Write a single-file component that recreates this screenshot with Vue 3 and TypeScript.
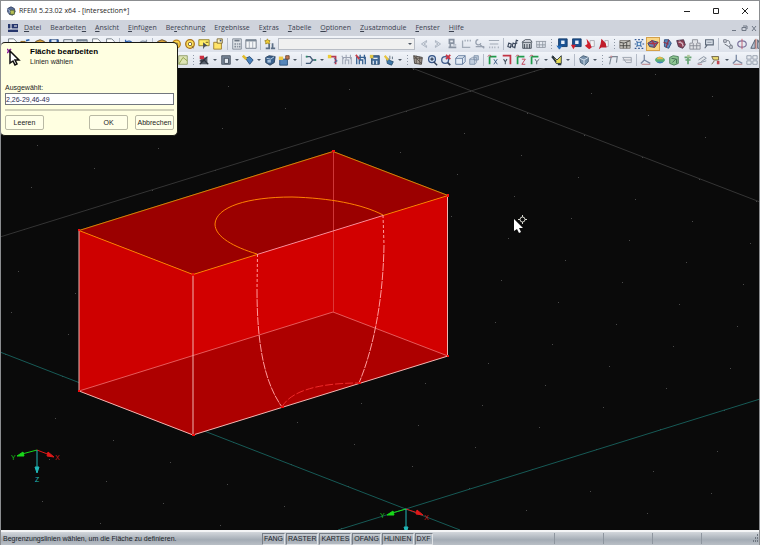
<script setup lang="ts">
import { ref } from 'vue'

interface Shape { d: string; f?: string; s?: string; w?: number }
type Item = string

const menus: { pre: string; key: string; post: string }[] = [
  { pre: '', key: 'D', post: 'atei' },
  { pre: 'Bearbeite', key: 'n', post: '' },
  { pre: '', key: 'A', post: 'nsicht' },
  { pre: '', key: 'E', post: 'infügen' },
  { pre: 'Be', key: 'r', post: 'echnung' },
  { pre: 'Er', key: 'g', post: 'ebnisse' },
  { pre: 'E', key: 'x', post: 'tras' },
  { pre: '', key: 'T', post: 'abelle' },
  { pre: '', key: 'O', post: 'ptionen' },
  { pre: '', key: 'Z', post: 'usatzmodule' },
  { pre: '', key: 'F', post: 'enster' },
  { pre: '', key: 'H', post: 'ilfe' },
]

const axes = (a: string, right: string): Shape[] => [
  { d: 'M3 3v9M3 3h8', s: '#1f9a4b', w: 2 },
  { d: 'M1 3l2-2 2 2', s: '#b03040', w: 1 },
  { d: a, s: right, w: 1 },
]

const glyphs: Record<string, Shape[]> = {
  page: [{ d: 'M3 1h6l3 3v8H3z', f: '#fff', s: '#66707c' }],
  open: [{ d: 'M1 4h5l1 2h6v6H1z', f: '#e9b33c', s: '#805a18' }, { d: 'M7 3l4-1', s: '#2860a8', w: 2 }],
  save: [{ d: 'M2 2h10v10H2z', f: '#2f62ae', s: '#183a70' }, { d: 'M4 2h6v4H4z', f: '#dbe6f4' }],
  box: [{ d: 'M2 4l5-2 5 2v6l-5 2-5-2z', f: '#dba43a', s: '#5c4420' }],
  sheet: [{ d: 'M2 2h10v10H2z', f: '#eef2f7', s: '#566270' }, { d: 'M2 5h10M5 5v7M9 5v7M5 8.500h7', s: '#98a4b0' }],
  undo: [{ d: 'M3 6c2-4 8-3 9 3M3 2v5h5', s: '#2f62ae', w: 1.5 }],
  redo: [{ d: 'M11 6c-2-4-8-3-9 3M11 2v5H6', s: '#8c98a8', w: 1.5 }],
  ring: [{ d: 'M3 7a4.500 4.500 0 1 0 9 0a4.500 4.500 0 1 0-9 0', f: '#ffd94a', s: '#b8801c', w: 1.5 }, { d: 'M5 6h4v3H5z', f: '#fff3b0', s: '#7a5a20' }],
  target: [{ d: 'M2 7a5 5 0 1 0 10 0a5 5 0 1 0-10 0', f: '#ffe25a', s: '#a8701c', w: 1.5 }, { d: 'M5 7a2 2 0 1 0 4 0a2 2 0 1 0-4 0M9 9l2 3', f: '#fff', s: '#6a5630' }],
  pick: [{ d: 'M1 2h12v7H1z', f: '#ffed68', s: '#8c7820' }, { d: 'M6 5l5 4-3 1-2 3z', f: '#444c58' }, { d: 'M9 5h3', s: '#5a4a10' }],
  folder: [{ d: 'M2 5h9v8H2z', f: '#ffe46a', s: '#97782a' }, { d: 'M6 1h6v5H6z', f: '#fff7c2', s: '#75602a' }, { d: 'M9 3h2', s: '#334e88', w: 2 }],
  calc: [{ d: 'M2 1h10v12H2z', f: '#dfe3e8', s: '#788390' }, { d: 'M4 3h6', s: '#6d7783', w: 2 }, { d: 'M4 7h2m1 0h1m1 0h2M4 10h2m1 0h1m1 0h2', s: '#828c98', w: 2 }],
  table: [{ d: 'M1 2h12v10H1z', f: '#f4f6f8', s: '#697482' }, { d: 'M1 3h12', s: '#7a8795', w: 2 }, { d: 'M5 4v8M9 4v8', s: '#a0aab4' }],
  result: [{ d: 'M4 1l1 2 2 0-1 2 1 2-3-1-2 1 0-2-1-2 2 0z', f: '#f3cf33', s: '#9f882a' }, { d: 'M2 12h4V7M8 12h5M10 12V6', s: '#5c6f86', w: 2 }],
  prev: [{ d: 'M10 3L4 7l6 4V9L7 7l3-2z', f: '#dde2ea', s: '#a4adba' }],
  next: [{ d: 'M4 3l6 4-6 4V9l3-2-3-2z', f: '#dde2ea', s: '#a4adba' }],
  gray1: [{ d: 'M4 2h5v4H4zM3 11h9M5 6v5', s: '#8993a2', w: 2 }, { d: 'M8 8h4', s: '#b9c0cc', w: 2 }],
  gray2: [{ d: 'M3 3v8h9M6 2v2m3-2v2m3-2v2', s: '#a2abb7', w: 1.5 }],
  gray3: [{ d: 'M5 2a3 3 0 1 0 3 4M2 10h10M7 8l5 4', s: '#98a1af', w: 1.5 }],
  gray4: [{ d: 'M1 3h12M2 7h10M2 10v2m3-2v2m3-2v2m4-2v2', s: '#a1a9b5', w: 1.2 }],
  glasses: [{ d: 'M2 6l3 1-1 4-3-1zM7 6l3 1-1 4-3-1zM11 2L9 12M11 3h2M10 6h2', s: '#39465a', w: 1.3 }],
  building: [{ d: 'M2 5h10v7H2z', f: '#c5cad0', s: '#3c454f' }, { d: 'M1 5l4-3h6l2 3M4 7v5m3-5v5m3-5v5', s: '#343d48' }],
  values: [{ d: 'M1 4h12M2 4v7h10V4M5 4v7m4-7v7M2 8h10', s: '#8c949f' }],
  blueload: [{ d: 'M3 1h10v9H3z', f: '#1b5292', s: '#123866' }, { d: 'M6 3h4v4H6z', f: '#e8f0fa' }, { d: 'M1 9l3 4 3-4', f: '#2068b8', s: '#2068b8' }],
  redload: [{ d: 'M3 1h10v9H3z', f: '#1b5292', s: '#123866' }, { d: 'M6 3h4v4H6z', f: '#e8f0fa' }, { d: 'M1 8h6l-3 5z', f: '#d0202c' }],
  redflag: [{ d: 'M7 3h5v7H7z', f: '#f3f3f5', s: '#a7a7b0' }, { d: 'M3 1l4 5 2 5-3 2-5-4 3-2z', f: '#cf1f2c' }],
  redflag2: [{ d: 'M8 3h4v7H8z', f: '#f3f3f5', s: '#a7a7b0' }, { d: 'M4 1l5 5 1 5-6 0-3 2 2-6z', f: '#c01d2a' }],
  grid: [{ d: 'M1 3h12v9H1z', f: '#c8c6bf', s: '#77746e' }, { d: 'M1 5l5 1 7-3M5 6v6M9 5v7M1 9h12', s: '#41403d' }],
  sun: [{ d: 'M2 2h2m2 0h2m2 0h2M2 7h2m7 0h2M2 12h2m2 0h2m2 0h2M4 4l6 6m0-6l-6 6', s: '#365a94', w: 1.4 }, { d: 'M5 5h4v4H5z', f: '#d5e8fa', s: '#2563a5' }],
  select: [{ d: 'M1 6l5-3 7 2-4 6-6-1z', f: '#6c86b3', s: '#283c66' }, { d: 'M2 6l7 1 4-2M5 3l4 4-1 4', s: '#ab3445', w: 1.5 }],
  member: [{ d: 'M4 2h5l3 4-3 6-5-2z', f: '#5b8ac0', s: '#244777' }, { d: 'M9 2L6 11M3 5l6 2', s: '#8f3146', w: 1.4 }],
  solid: [{ d: 'M2 3l8-1 2 6-3 4-5-2z', f: '#8c4054', s: '#453048' }, { d: 'M4 5l5 1v4M5 3l5 6', s: '#dbc0cc' }],
  mesh: [{ d: 'M4 2h6v4h3v7H1V6h3zM1 9h12M5 6v7m4-7v7', f: '#e0e1e5', s: '#858891' }],
  frame: [{ d: 'M3 2h9v6H3zM2 12l3-4', f: '#d9dfe8', s: '#5d6979', w: 1.3 }, { d: 'M5 5h5', s: '#7e8997' }],
  nodes: [{ d: 'M2 2h3v3H2zM9 9h3v3H9z', f: '#e2e5eb', s: '#656a78' }, { d: 'M6 3c5 0 1 4 5 5M3 7l5 3', s: '#575d69' }],
  rotate: [{ d: 'M2 7c0-5 10-5 10 0s-10 5-10 0', s: '#7e759f', w: 1.4 }, { d: 'M7 1v12', s: '#bd5266' }],
  mirror: [{ d: 'M6 2v10H1zM9 2v10h5z', f: '#b8c3d2', s: '#4a5666' }, { d: 'M7 1v12', s: '#c15a4a' }],
  green: [{ d: 'M2 2h10v10H2z', f: '#dde4b5', s: '#8a9862' }, { d: 'M2 12l5-8 5 4', s: '#8b9e3f' }],
  cut: [{ d: 'M3 4h8v8H3z', f: '#59606c' }, { d: 'M2 12l9-9M4 4l8 8M2 8h5', s: '#2f3540', w: 1.4 }, { d: 'M2 2h5v4H2z', f: '#cc3141' }],
  hollow: [{ d: 'M2 2h10v10H2z', f: '#7a8798', s: '#48525f' }, { d: 'M5 5h5v6H5z', f: '#e3e9f0', s: '#394452' }],
  surface: [{ d: 'M4 5l5-2 4 4-4 5z', f: '#4a82bd', s: '#234770' }, { d: 'M1 2l4 4', s: '#e2bb2c', w: 3 }],
  cube: [{ d: 'M2 4l4-2 7 1-1 7-5 3-5-3z', f: '#3c638f', s: '#263d59' }, { d: 'M3 5l5 1 4-3', s: '#d0dfef' }, { d: 'M4 7h4v3H4z', f: '#a8c2dd' }],
  insert: [{ d: 'M2 6h9v7H2z', f: '#5686ba', s: '#284d79' }, { d: 'M1 3h5v4H1z', f: '#edc843' }, { d: 'M9 2h4v4H9z', f: '#c9784e', s: '#654433' }],
  branch: [{ d: 'M1 3h5l3 4-3 4H1M9 7h4', s: '#435a77', w: 1.6 }, { d: 'M1 2h2v2H1zM11 6h2v2h-2z', f: '#2e8f69' }],
  support: [{ d: 'M3 3h7v9', s: '#b43951', w: 2 }, { d: 'M1 1h4v4H1z', f: '#edcc36' }, { d: 'M8 5l4 3-4 2', s: '#316296' }],
  fadebeam: [{ d: 'M2 12V4h10v8M5 12V7h4v5M1 2l2 4M6 1v5m5-5v5', s: '#9ba2b2', w: 1.2 }],
  beam: [{ d: 'M2 12V4h10v8M5 12V7h4v5M6 1v5m5-5v5', s: '#356090', w: 1.5 }, { d: 'M1 1l4 5', s: '#c23d49', w: 2 }],
  panel: [{ d: 'M3 2h9v10H3z', f: '#436b98', s: '#274566' }, { d: 'M5 5h5M5 8v4m4-4v4', s: '#e3eaf2', w: 1.4 }, { d: 'M1 1h4v4H1z', f: '#ddc345' }],
  hand: [{ d: 'M4 4l5 4 3 1-2 4-5-2z', f: '#3e78a9', s: '#274b6a' }, { d: 'M2 2l4 5', s: '#e8c43d', w: 2.5 }, { d: 'M8 2v4m3-3v3', s: '#576879' }],
  zoomall: [{ d: 'M2 2l10 2-1 8-8-1z', f: '#a49b92', s: '#3f3c39' }, { d: 'M2 5h10M5 2v9M9 3v9M2 2l9 9', s: '#59524b' }],
  lens: [{ d: 'M3 6a4 4 0 1 0 8 0a4 4 0 1 0-8 0', f: '#cfddf0', s: '#355486', w: 1.5 }, { d: 'M9 9l4 4M5 6h4M7 4v4', s: '#30415b', w: 1.6 }],
  lensx: [{ d: 'M2 7a4 4 0 1 0 8 0a4 4 0 1 0-8 0', f: '#dbe4f2', s: '#405c8c', w: 1.5 }, { d: 'M9 10l3 3', s: '#354259', w: 2 }, { d: 'M7 1l5 5m0-5L7 6', s: '#c93344', w: 2 }],
  wire: [{ d: 'M2 5l3-3h8v7l-3 3H2zM2 5h8v7M10 5l3-3', f: '#e3ebf5', s: '#587296' }],
  cubes: [{ d: 'M2 6h6v6H2zM7 2h5v5H7z', f: '#c0cddd', s: '#7b8da6' }, { d: 'M2 6l3-2h5v6l-2 2', s: '#8999b0' }],
  ax: axes('M8 6l4 6m0-6l-4 6', '#31537d'),
  ay: [{ d: 'M2 2h10M11 2v10', s: '#c23445', w: 2 }, { d: 'M3 6l2 3 2-3M5 9v3', s: '#444f5d', w: 1.2 }],
  az: axes('M8 6h4l-4 6h4', '#be3147'),
  ayz: axes('M7 6l2 3 3-3M9 9v3', '#424d59'),
  style: [{ d: 'M2 2l5 5 5-5v9H6z', f: '#e8dd55', s: '#25323c' }, { d: 'M1 3l5 6M8 12h4', s: '#26313c', w: 2 }],
  view: [{ d: 'M2 5l4-3 6 2v5l-4 4-5-3z', f: '#7891ab', s: '#3e566e' }, { d: 'M2 5l5 2 5-3M7 7v6', s: '#dfebf5' }],
  poly: [{ d: 'M3 12L5 3h7l-1 7M2 4h4', s: '#7d8793', w: 1.3 }, { d: 'M4 2h2v2H4z', f: '#c78992' }],
  dim: [{ d: 'M2 4h10v6H6zM2 7h10', f: '#e6e6ea', s: '#969da9' }],
  deform: [{ d: 'M5 1v6l7 4M5 7l-4 4', s: '#7988a2', w: 1.5 }, { d: 'M2 12h10', s: '#b67279' }],
  rainbow: [{ d: 'M1 7c2-5 9-5 12 0-3 5-9 5-12 0', f: '#57ae77' }, { d: 'M3 6c3-5 7-2 8 0z', f: '#e3b64b' }, { d: 'M3 9c3 3 6 2 8 0z', f: '#427fbf' }],
  greencube: [{ d: 'M2 4l4-2 6 1v8l-5 2-5-2z', f: '#8ec592', s: '#467b55' }, { d: 'M4 5l6 1v5M5 10l4-4', s: '#3d6651' }],
  tree: [{ d: 'M7 12V4M3 4h8M4 7h6', s: '#67a574', w: 2 }, { d: 'M6 1h3v3H6z', f: '#b0c79a' }],
  section: [{ d: 'M2 11l10-3M3 7l6-4 3 2-6 4', f: '#e1e5ea', s: '#7f8a99' }, { d: 'M2 12h5', s: '#af737e' }],
  arrows: [{ d: 'M2 3h8v4H4zM5 8l-3 4', f: '#eadb72', s: '#63583c' }, { d: 'M8 8h3v4H8z', f: '#c04852' }],
  win: [{ d: 'M1 2h5v4H1zM8 2h5v4H8zM1 8h5v4H1zM8 8h5v4H8z', f: '#e9edf2', s: '#8d98a7' }],
}

const split = (s: string): Item[] => s.split(' ')
const rowOne = split('page open box save sheet table page page | undo redo | box ring target pick folder | calc table | result = prev next gray1 gray2 gray3 gray4 | glasses building values : blueload redload redflag redflag2 : grid sun select member solid mesh frame | nodes rotate mirror')
const rowTwo = split('page open box save sheet table page undo redo cube hollow sheet green : cut v hollow v surface v cube insert v | branch v support fadebeam beam panel hand v : zoomall lens lensx wire cubes | ax ay az ayz v style v | view v : poly dim | deform rainbow greencube tree section arrows v deform win')

const modes = ['FANG', 'RASTER', 'KARTES', 'OFANG', 'HLINIEN', 'DXF']
const selected = ref('2,26-29,46-49')
const filter = ref('')

/* Raster points of the work plane, spanned from its origin by two step vectors. */
const origin = { x: 405, y: 508 }
const dots: { x: number; y: number }[] = []
for (let a = -12; a <= 12; a++) {
  for (let b = -18; b <= 12; b++) {
    const x = origin.x + a * 63.7 - b * 6.5
    const y = origin.y - a * 19.7 + b * 41.7
    if (x > 0 && x < 760 && y > 68 && y < 530) dots.push({ x: Math.round(x), y: Math.round(y) })
  }
}
</script>

<template>
  <div class="app">
    <header class="titlebar">
      <svg class="logo" viewBox="0 0 12 12" aria-hidden="true">
        <path d="M2 3l4-2 4 2 1 4-3 4-4-1-2-3z" fill="#5a6f9c" stroke="#2c3a58" />
        <path d="M5 5h5v5H5z" fill="#b7bf52" stroke="#4c5b3a" />
        <path d="M1 3l4 3-2 3" fill="none" stroke="#a7b7d8" />
      </svg>
      <h1>RFEM 5.23.02 x64 - [intersection*]</h1>
      <div class="winbtns">
        <button type="button" aria-label="Minimieren"><svg viewBox="0 0 8 8"><path d="M1 4.500h6" /></svg></button>
        <button type="button" aria-label="Maximieren"><svg viewBox="0 0 8 8"><path d="M1.500 1.500h5v5h-5z" /></svg></button>
        <button type="button" aria-label="Schließen"><svg viewBox="0 0 8 8"><path d="M1 1l6 6M7 1L1 7" /></svg></button>
      </div>
    </header>

    <nav class="menubar">
      <svg class="doc" viewBox="0 0 12 10" aria-hidden="true">
        <path d="M1 1h10v8H1z" fill="#26366d" />
        <path d="M1 6h10M4 1v5M7 3h3" fill="none" stroke="#fff" />
      </svg>
      <a v-for="m in menus" :key="m.pre + m.key + m.post" href="#">{{ m.pre }}<u>{{ m.key }}</u>{{ m.post }}</a>
      <div class="mdibtns">
        <button type="button" aria-label="Fenster minimieren"><svg viewBox="0 0 8 8"><path d="M2 6.500h4" /></svg></button>
        <button type="button" aria-label="Fenster wiederherstellen"><svg viewBox="0 0 8 8"><path d="M2 3.500h4v3H2zM3 2h4v3" /></svg></button>
        <button type="button" aria-label="Fenster schließen"><svg viewBox="0 0 8 8"><path d="M2 2l4 5M6 2L2 7" /></svg></button>
      </div>
    </nav>

    <div v-for="(row, r) in [rowOne, rowTwo]" :key="r" class="toolbar" :class="{ second: r === 1 }" role="toolbar">
      <template v-for="(it, i) in row" :key="i">
        <span v-if="it === '|'" class="sep"></span>
        <span v-else-if="it === ':'" class="grip"></span>
        <button v-else-if="it === 'v'" type="button" class="drop" aria-label="Mehr"></button>
        <span v-else-if="it === '='" class="combo">
          <select v-model="filter" aria-label="Lastfall"><option value=""></option></select>
        </span>
        <button v-else type="button" class="tool" :class="{ active: it === 'select' }" :aria-label="it">
          <svg viewBox="0 0 14 14">
            <path v-for="(p, k) in glyphs[it]" :key="k" :d="p.d" :fill="p.f ?? 'none'" :stroke="p.s ?? 'none'" :stroke-width="p.w ?? 1" />
          </svg>
        </button>
      </template>
    </div>

    <main class="viewport">
      <svg class="scene" viewBox="1 68 758 462" preserveAspectRatio="xMidYMid slice">
        <g class="dots"><rect v-for="(d, i) in dots" :key="i" :x="d.x" :y="d.y" width="1" height="1" /></g>
        <path class="guide" d="M0 237L545 68M412 68L760 202" />
        <path class="axis" d="M0 352L460 530M338 530L760 399" />

        <path fill="#d20000" d="M79 230L193 274L448 195V356L193 435L79 391z" />
        <path fill="#ca0000" opacity=".5" d="M79 230L193 274V435L79 391z" />
        <path fill="#ad0000" d="M79 391L333 312L448 356L193 435z" />
        <path fill="#9b0000" d="M79 230L333 151L448 195L193 274z" />

        <path class="hidden" d="M333 312L79 391M333 312L448 356" />
        <path class="hidden faint" d="M333.500 151V312" />
        <path class="edge" d="M79 230V391L193 435L448 356M193 274V435M447.500 195V356" />
        <path class="hot" d="M257 254.500L193 274.500L79 230.500M448 195.500L383 215.500" />
        <path class="top" d="M79 230.500L333 151.500L448 195.500" />
        <path class="cut" d="M257 254.500L383 215.500" />
        <path class="hot" d="M257 254C234 247 215 237 215 224C216 207 247 197 292 197C329 198 362 204 383 215" />
        <path class="bore upper" d="M257.500 254L257 290M383 215L384 245" />
        <path class="bore" d="M257 290C257 343 264 382 282 407M384 245C383 305 372 352 359 383" />
        <path class="floor" d="M282 407C290 392 316 383 359 383" />
        <path fill="#f01010" d="M78 229h2v2h-2zM332 150h3v2h-3zM447 194h2v3h-2zM192 273h2v3h-2zM78 390h2v2h-2zM192 434h3v2h-3zM447 355h2v2h-2zM281 406h3v2h-3zM358 382h3v2h-3z" />

        <g class="triad">
          <path class="x" d="M37 450L50 455M54 457l-6-5-1 4z" />
          <path class="y" d="M37 450L22 454M17 456l6-4 1 4z" />
          <path class="z" d="M37 450V469M37 473l-2-6h4z" />
          <text class="x" x="55" y="460">X</text>
          <text class="y" x="11" y="460">Y</text>
          <text class="z" x="35" y="482">Z</text>
        </g>
        <g class="triad">
          <path class="x" d="M406 509L418 513M423 515l-6-5-1 4z" />
          <path class="y" d="M406 509L392 513M387 515l6-4 1 4z" />
          <path class="z" d="M406 509V530M406 533l-2-6h4z" />
          <text class="x" x="424" y="520">X</text>
          <text class="y" x="380" y="518">Y</text>
        </g>

        <path fill="#fff" d="M514 219v12l3-2 2 4 2-1-2-4h4z" />
        <g fill="none" stroke="#d8d8d0"><circle cx="522.500" cy="219.500" r="2.500" /><path d="M522.500 215v2M522.500 222v2M518 219.500h2M525 219.500h2" /></g>
      </svg>
    </main>

    <footer class="status">
      <p>Begrenzungslinien wählen, um die Fläche zu definieren.</p>
      <div class="modes"><button v-for="m in modes" :key="m" type="button">{{ m }}</button></div>
      <div class="cells"><span></span><span></span><span></span><span></span></div>
      <svg class="sizer" viewBox="0 0 9 9" aria-hidden="true"><path d="M7 1h1M5 4h1M7 4h1M3 7h1M5 7h1M7 7h1" stroke="#6d757e" stroke-width="2" /></svg>
    </footer>

    <form class="dialog" @submit.prevent>
      <div class="head">
        <svg viewBox="0 0 14 18" aria-hidden="true">
          <path d="M0 1l4 4M4 1L0 5" fill="none" stroke="#8a1a9a" stroke-width="1.500" />
          <path d="M3 3v12l3-2 2 4 2-1-2-4h4z" fill="#fff" stroke="#101010" stroke-width="1.500" />
        </svg>
        <div>
          <h2>Fläche bearbeiten</h2>
          <p>Linien wählen</p>
        </div>
      </div>
      <label for="sel">Ausgewählt:</label>
      <input id="sel" v-model="selected" type="text" />
      <hr />
      <div class="actions">
        <button type="button" @click="selected = ''">Leeren</button>
        <button type="submit" class="ok">OK</button>
        <button type="button">Abbrechen</button>
      </div>
    </form>
  </div>
</template>

<style>
body { margin: 0; overflow: hidden; }
</style>

<style scoped>
* { box-sizing: border-box; }
.app {
  position: relative;
  display: flex;
  flex-direction: column;
  height: 100vh;
  border: 1px solid #8b8d90;
  border-bottom: 0;
  font-family: "Liberation Sans", Arial, sans-serif;
  font-size: 7px;
  line-height: 10px;
  color: #1c1c1c;
  background: #fff;
}
button { padding: 0; border: 0; background: none; font: inherit; color: inherit; }
svg { display: block; }
h1, h2, p { margin: 0; font-size: inherit; font-weight: normal; }

.titlebar { display: flex; align-items: center; height: 19px; padding-left: 5px; gap: 3px; flex: none; }
.logo { width: 10px; height: 12px; }
.titlebar h1 { font-family: "Open Sans", sans-serif; flex: 1; }
.winbtns { display: flex; }
.winbtns button { width: 29px; height: 18px; display: grid; place-items: center; }
.winbtns svg { width: 8px; height: 8px; fill: none; stroke: #222; }

.menubar { display: flex; align-items: center; height: 16px; padding-left: 6px; gap: 9px; background: #cfd3dc; flex: none; font-family: "Open Sans", sans-serif; color: #3b4250; }
.menubar a { color: inherit; text-decoration: none; }
.doc { width: 12px; height: 10px; margin-right: -4px; }
.mdibtns { display: flex; margin-left: auto; gap: 2px; padding-right: 1px; }
.mdibtns svg { width: 8px; height: 8px; fill: none; stroke: #6f7784; }

.toolbar { display: flex; align-items: center; height: 16px; padding-left: 4px; overflow: hidden; flex: none; background: linear-gradient(#f1f4f9, #dce1ea); }
.toolbar.second { padding-left: 7px; }
.tool { flex: none; width: 14px; height: 14px; padding: 1px; }
.tool svg { width: 12px; height: 12px; }
.tool.active { background: #fbd683; outline: 1px solid #d4a04a; outline-offset: -1px; }
.sep { flex: none; width: 5px; height: 12px; background: linear-gradient(#b5bcc8, #b5bcc8) center / 1px 100% no-repeat; }
.grip { flex: none; width: 7px; height: 12px; background: radial-gradient(#8f98a6 1px, transparent 1px) center top / 3px 3px repeat-y; }
.drop { flex: none; width: 8px; height: 12px; display: grid; place-items: center; }
.drop::after { content: ""; border: 2px solid transparent; border-top-color: #4d5663; border-bottom: 0; }
.combo { position: relative; flex: none; width: 137px; height: 12px; margin: 0 2px 0 1px; }
.combo select { display: block; width: 100%; height: 100%; padding: 0; border: 1px solid #b7bcc5; border-radius: 0; appearance: none; background: #f0f0f0; }
.combo::after { content: ""; position: absolute; right: 3px; top: 5px; border: 2px solid transparent; border-top-color: #4d5663; border-bottom: 0; pointer-events: none; }

.viewport { flex: 1; min-height: 0; background: #0a0a0a; }
.scene { width: 100%; height: 100%; fill: none; }
.dots { fill: #4a4a4a; }
.guide { stroke: #343434; }
.axis { stroke: #175a56; }
.hidden { stroke: #e65a5a; }
.faint { stroke: #e04a4a; opacity: .75; }
.edge { stroke: #f0b4b0; }
.hot { stroke: #ff8200; }
.top { stroke: #c88a08; }
.cut { stroke: #ff8c98; }
.bore { stroke: #ff9c9c; stroke-dasharray: 8 1; }
.bore.upper { stroke-dasharray: 3 2; }
.floor { stroke: #f02a2a; stroke-dasharray: 8 2; }
.triad { font-size: 7px; }
.triad path.x { stroke: #e01818; fill: #e01818; }
.triad path.y { stroke: #18d818; fill: #18d818; }
.triad path.z { stroke: #20b8b8; fill: #20b8b8; }
.triad text.x { fill: #d01818; }
.triad text.y { fill: #18c018; }
.triad text.z { fill: #20b8b8; }

.status { display: flex; align-items: center; flex: none; height: 15px; padding-left: 2px; border-top: 2px solid #f4f5f6; background: linear-gradient(#d3d7dc, #a4acb5 60%, #b9bfc6); color: #20242a; }
.status p { width: 259px; }
.modes { display: flex; gap: 1px; }
.modes button { height: 12px; padding: 0 1px; border: 1px solid #777e87; border-right-color: #dfe2e5; border-bottom-color: #dfe2e5; line-height: 10px; }
.cells { display: flex; margin-left: auto; }
.cells span { width: 49px; height: 11px; border-left: 1px solid #8e969f; }
.sizer { width: 9px; height: 9px; }

.dialog { position: absolute; top: 41px; left: -1px; width: 178px; padding: 4px 3px 5px 4px; background: #ffffe1; border: 1px solid #1a1a14; border-left-color: #8b8d90; border-radius: 5px; }
.head { display: flex; gap: 9px; height: 36px; padding-left: 2px; }
.head svg { width: 14px; height: 18px; margin-top: 1px; }
.head h2 { font-size: 8px; font-weight: bold; color: #000; }
.dialog label { display: block; line-height: 9px; }
.dialog input { display: block; width: 100%; height: 12px; margin: 1px 0 4px; padding: 0; border: 1px solid #72777e; background: #fff; font: inherit; color: #1f2c50; }
.dialog hr { margin: 0 0 4px; border: 0; border-top: 2px solid #d2d2ba; }
.actions { display: flex; gap: 7px; }
.actions button { width: 39px; height: 15px; border: 1px solid #b9b9a4; border-radius: 2px; background: #ffffe8; }
.actions .ok { margin-left: auto; }
</style>
